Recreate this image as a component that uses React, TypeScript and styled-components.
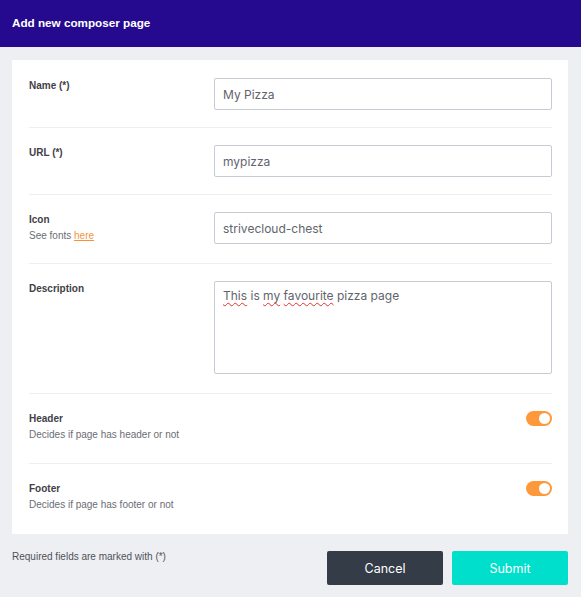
import React from "react";
import styled, { createGlobalStyle } from "styled-components";

const Global = createGlobalStyle`
  html, body { margin: 0; padding: 0; background: #eeeff3; }
  body { font-family: "Liberation Sans", Arial, sans-serif; }
  * { box-sizing: border-box; }
`;

const Page = styled.div`
  width: 581px;
  min-height: 597px;
  background: #eeeff3;
  display: flex;
  flex-direction: column;
`;

const TopBar = styled.header`
  height: 47px;
  background: #250a8f;
  display: flex;
  align-items: center;
  padding: 0 12px 2px;
`;

const Title = styled.h1`
  margin: 0;
  color: #ffffff;
  font-family: "Liberation Sans", Arial, sans-serif;
  font-weight: 700;
  font-size: 11.7px;
`;

const Body = styled.main`
  padding: 13px 13px 0 12px;
  display: flex;
  flex-direction: column;
`;

const Card = styled.section`
  background: #ffffff;
  padding: 1px 16px 2px 17px;
`;

const Row = styled.div<{ $last?: boolean; $pb?: number }>`
  display: flex;
  align-items: flex-start;
  padding: 17px 0 ${(p) => p.$pb ?? 17}px;
  border-bottom: ${(p) => (p.$last ? "none" : "1px solid #eceef2")};
`;

const LabelCol = styled.div`
  width: 185px;
  flex: none;
  padding: 1px 0 3px;
  display: flex;
  flex-direction: column;
`;

const Label = styled.div`
  font-family: "Liberation Sans", Arial, sans-serif;
  font-weight: 700;
  font-size: 10px;
  line-height: 14px;
  color: #3f4048;
`;

const Hint = styled.div`
  margin-top: 1px;
  font-family: "Liberation Sans", Arial, sans-serif;
  font-size: 10px;
  line-height: 15px;
  color: #6b6d75;
`;

const HintLink = styled.a`
  color: #f7923a;
  text-decoration: underline;
`;

const Field = styled.div`
  flex: 1;
  display: flex;
  justify-content: flex-end;
`;

const TextInput = styled.input`
  display: block;
  width: 100%;
  height: 32px;
  border: 1px solid #c7cbd3;
  border-radius: 2px;
  padding: 0 8px;
  font-family: Inter, "Open Sans", sans-serif;
  font-size: 12px;
  font-weight: 400;
  color: #62646b;
  background: #fff;
  outline: none;
`;

const FakeArea = styled.div`
  width: 100%;
  height: 93px;
  border: 1px solid #c7cbd3;
  border-radius: 2px;
  padding: 6px 8px;
  font-family: Inter, "Open Sans", sans-serif;
  font-size: 12px;
  line-height: 16px;
  color: #62646b;
  outline: none;
`;

const Spell = styled.span`
  text-decoration: underline wavy #e0332e;
  text-decoration-thickness: 1px;
  text-underline-offset: 2px;
`;

const Toggle = styled.span<{ $on: boolean }>`
  width: 26px;
  height: 15px;
  border-radius: 8px;
  background: ${(p) => (p.$on ? "#fd993a" : "#c7cbd3")};
  position: relative;
  display: inline-block;
  &::after {
    content: "";
    position: absolute;
    top: 2px;
    left: ${(p) => (p.$on ? "13px" : "2px")};
    width: 11px;
    height: 11px;
    border-radius: 50%;
    background: #ffffff;
  }
`;

const Footer = styled.footer`
  display: flex;
  align-items: flex-start;
  justify-content: space-between;
  padding-top: 17px;
`;

const Note = styled.div`
  font-family: "Liberation Sans", Arial, sans-serif;
  font-size: 10px;
  line-height: 12px;
  color: #4f5159;
`;

const Buttons = styled.div`
  display: flex;
  gap: 9px;
`;

const Button = styled.button<{ $variant: "dark" | "accent" }>`
  width: 116px;
  height: 34px;
  border: none;
  border-radius: 2px;
  background: ${(p) => (p.$variant === "dark" ? "#343c48" : "#00dfcb")};
  color: #ffffff;
  font-family: Inter, "Open Sans", sans-serif;
  font-size: 12.5px;
  font-weight: 400;
  cursor: pointer;
`;

function DescriptionBox() {
  return (
    <FakeArea role="textbox" aria-multiline="true" contentEditable suppressContentEditableWarning>
      <Spell>This</Spell> is <Spell>my</Spell> <Spell>favourite</Spell> pizza page
    </FakeArea>
  );
}

export default function App() {
  return (
    <Page>
      <Global />
      <TopBar>
        <Title>Add new composer page</Title>
      </TopBar>
      <Body>
        <Card>
          <Row>
            <LabelCol>
              <Label>Name (*)</Label>
            </LabelCol>
            <Field>
              <TextInput defaultValue="My Pizza" />
            </Field>
          </Row>
          <Row>
            <LabelCol>
              <Label>URL (*)</Label>
            </LabelCol>
            <Field>
              <TextInput defaultValue="mypizza" />
            </Field>
          </Row>
          <Row>
            <LabelCol>
              <Label>Icon</Label>
              <Hint>
                See fonts <HintLink href="#">here</HintLink>
              </Hint>
            </LabelCol>
            <Field>
              <TextInput defaultValue="strivecloud-chest" />
            </Field>
          </Row>
          <Row $pb={19}>
            <LabelCol>
              <Label>Description</Label>
            </LabelCol>
            <Field>
              <DescriptionBox />
            </Field>
          </Row>
          <Row $pb={18}>
            <LabelCol>
              <Label>Header</Label>
              <Hint>Decides if page has header or not</Hint>
            </LabelCol>
            <Field>
              <Toggle $on />
            </Field>
          </Row>
          <Row $last>
            <LabelCol>
              <Label>Footer</Label>
              <Hint>Decides if page has footer or not</Hint>
            </LabelCol>
            <Field>
              <Toggle $on />
            </Field>
          </Row>
        </Card>
        <Footer>
          <Note>Required fields are marked with (*)</Note>
          <Buttons>
            <Button $variant="dark">Cancel</Button>
            <Button $variant="accent">Submit</Button>
          </Buttons>
        </Footer>
      </Body>
    </Page>
  );
}
